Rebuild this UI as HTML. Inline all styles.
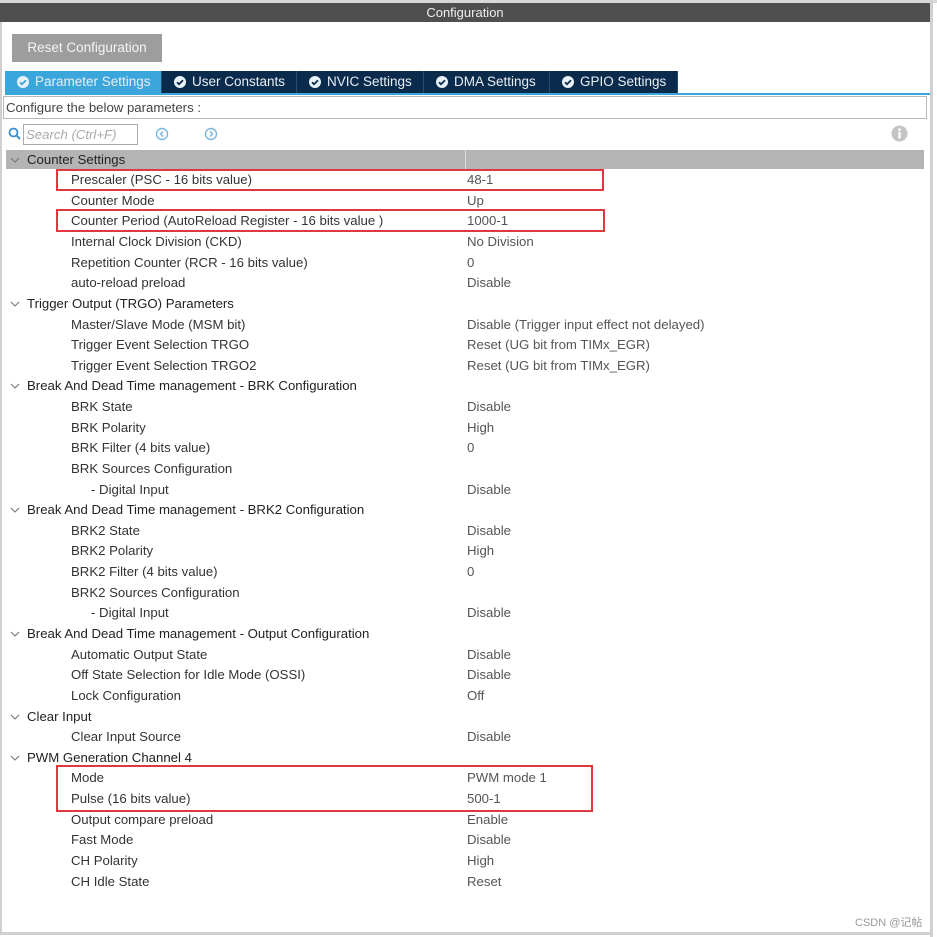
<!DOCTYPE html>
<html><head><meta charset="utf-8"><style>
*{margin:0;padding:0;box-sizing:border-box}
body{width:937px;height:937px;background:#fff;position:relative;overflow:hidden;font-family:"Liberation Sans","Noto Sans CJK SC",sans-serif;font-size:13.2px;color:#333}
.a{position:absolute;white-space:nowrap}
.title{left:0;top:3px;width:930px;height:19px;background:#4f4f4f;color:#eee;text-align:center;font-size:13px;line-height:19px}
.tab{top:71px;height:22px;background:#0b2b4c;color:#e8eef4;line-height:22px;padding-left:12px;border-right:1px solid #2a4a6a;font-size:13.5px}
.tab.act{background:#3ba6dc}
.tab svg{vertical-align:-2px;margin-right:6px}
.r{position:absolute;white-space:nowrap;line-height:20px;height:20px}
.g{color:#222}
.red{position:absolute;border:2px solid #e0383d}
</style></head><body>
<div class="a" style="left:0;top:0;width:937px;height:3px;background:#d8d8d8"></div>
<div class="a title">Configuration</div>
<div class="a" style="left:930px;top:0;width:3px;height:937px;background:#d0d0d0"></div>
<div class="a" style="left:0;top:22px;width:2px;height:912px;background:#d0d0d0"></div>
<div class="a" style="left:0;top:932px;width:933px;height:3px;background:#d0d0d0"></div>
<div class="a" style="left:12px;top:34px;width:150px;height:28px;background:#9d9d9d;color:#f4f4f4;line-height:28px;text-align:center;font-size:13.5px">Reset Configuration</div>
<div class="a" style="left:5px;top:93px;width:925px;height:2px;background:#3ba6dc"></div>
<div class="a tab act" style="left:5px;width:157px"><svg width="12" height="12"><circle cx="6" cy="6" r="6" fill="#e8f2f8"/><path d="M3 6.2l2 2 4-4" stroke="#3ba6dc" stroke-width="1.8" fill="none"/></svg>Parameter Settings</div>
<div class="a tab" style="left:162px;width:135px"><svg width="12" height="12"><circle cx="6" cy="6" r="6" fill="#e8f2f8"/><path d="M3 6.2l2 2 4-4" stroke="#0b2b4c" stroke-width="1.8" fill="none"/></svg>User Constants</div>
<div class="a tab" style="left:297px;width:127px"><svg width="12" height="12"><circle cx="6" cy="6" r="6" fill="#e8f2f8"/><path d="M3 6.2l2 2 4-4" stroke="#0b2b4c" stroke-width="1.8" fill="none"/></svg>NVIC Settings</div>
<div class="a tab" style="left:424px;width:126px"><svg width="12" height="12"><circle cx="6" cy="6" r="6" fill="#e8f2f8"/><path d="M3 6.2l2 2 4-4" stroke="#0b2b4c" stroke-width="1.8" fill="none"/></svg>DMA Settings</div>
<div class="a tab" style="left:550px;width:128px"><svg width="12" height="12"><circle cx="6" cy="6" r="6" fill="#e8f2f8"/><path d="M3 6.2l2 2 4-4" stroke="#0b2b4c" stroke-width="1.8" fill="none"/></svg>GPIO Settings</div>
<div class="a" style="left:3px;top:96px;width:924px;height:23px;border:1px solid #b8b8b8;line-height:21px;padding-left:2px;color:#444">Configure the below parameters :</div>
<svg class="a" style="left:8px;top:127px" width="14" height="14"><circle cx="5.5" cy="5.5" r="4" stroke="#3a8fd0" stroke-width="1.8" fill="none"/><path d="M8.5 8.5l3.5 3.5" stroke="#3a8fd0" stroke-width="2"/></svg>
<div class="a" style="left:23px;top:124px;width:115px;height:21px;border:1px solid #aaa;color:#aaa;font-style:italic;line-height:19px;padding-left:2px">Search (Ctrl+F)</div>
<svg class="a" style="left:155px;top:127px" width="14" height="14"><circle cx="7" cy="7" r="5.5" stroke="#7ab7e0" stroke-width="1.4" fill="none"/><path d="M8 4.5L5.5 7 8 9.5" stroke="#7ab7e0" stroke-width="1.4" fill="none"/></svg>
<svg class="a" style="left:204px;top:127px" width="14" height="14"><circle cx="7" cy="7" r="5.5" stroke="#7ab7e0" stroke-width="1.4" fill="none"/><path d="M6 4.5L8.5 7 6 9.5" stroke="#7ab7e0" stroke-width="1.4" fill="none"/></svg>
<svg class="a" style="left:891px;top:125px" width="17" height="17"><circle cx="8.5" cy="8.5" r="8" fill="#c4c4c4"/><rect x="7.3" y="7" width="2.4" height="6.5" fill="#fff"/><circle cx="8.5" cy="4.6" r="1.4" fill="#fff"/></svg>
<div class="a" style="left:6px;top:150px;width:918px;height:19px;background:#b4b4b4"></div>
<div class="a" style="left:465px;top:150px;width:1px;height:19px;background:#ddd"></div>
<div id="rows"></div>
<div class="red" style="left:56px;top:169px;width:548px;height:22px"></div>
<div class="red" style="left:56px;top:209px;width:549px;height:23px"></div>
<div class="red" style="left:56px;top:765px;width:537px;height:47px"></div>
<div class="a" style="left:855px;top:914px;font-size:11px;color:#999">CSDN @记帖</div>
<script>
var R=[
["g","Counter Settings",""],
["c","Prescaler (PSC - 16 bits value)","48-1"],
["c","Counter Mode","Up"],
["c","Counter Period (AutoReload Register - 16 bits value )","1000-1"],
["c","Internal Clock Division (CKD)","No Division"],
["c","Repetition Counter (RCR - 16 bits value)","0"],
["c","auto-reload preload","Disable"],
["g","Trigger Output (TRGO) Parameters",""],
["c","Master/Slave Mode (MSM bit)","Disable (Trigger input effect not delayed)"],
["c","Trigger Event Selection TRGO","Reset (UG bit from TIMx_EGR)"],
["c","Trigger Event Selection TRGO2","Reset (UG bit from TIMx_EGR)"],
["g","Break And Dead Time management - BRK Configuration",""],
["c","BRK State","Disable"],
["c","BRK Polarity","High"],
["c","BRK Filter (4 bits value)","0"],
["c","BRK Sources Configuration",""],
["d","- Digital Input","Disable"],
["g","Break And Dead Time management - BRK2 Configuration",""],
["c","BRK2 State","Disable"],
["c","BRK2 Polarity","High"],
["c","BRK2 Filter (4 bits value)","0"],
["c","BRK2 Sources Configuration",""],
["d","- Digital Input","Disable"],
["g","Break And Dead Time management - Output Configuration",""],
["c","Automatic Output State","Disable"],
["c","Off State Selection for Idle Mode (OSSI)","Disable"],
["c","Lock Configuration","Off"],
["g","Clear Input",""],
["c","Clear Input Source","Disable"],
["g","PWM Generation Channel 4",""],
["c","Mode","PWM mode 1"],
["c","Pulse (16 bits value)","500-1"],
["c","Output compare preload","Enable"],
["c","Fast Mode","Disable"],
["c","CH Polarity","High"],
["c","CH Idle State","Reset"]];
var h="";
R.forEach(function(r,i){var t=149.5+i*20.63;
if(r[0]=="g"){h+='<svg class="a" style="left:10px;top:'+(t+7)+'px" width="10" height="7"><path d="M1 1l4 4 4-4" stroke="#777" stroke-width="1.1" fill="none"/></svg><div class="r g" style="left:27px;top:'+t+'px">'+r[1]+'</div>';}
else{h+='<div class="r" style="left:'+(r[0]=="d"?91:71)+'px;top:'+t+'px">'+r[1]+'</div>';}
if(r[2])h+='<div class="r" style="left:467px;top:'+t+'px;color:#555">'+r[2]+'</div>';});
document.getElementById("rows").innerHTML=h;
</script>
</body></html>
